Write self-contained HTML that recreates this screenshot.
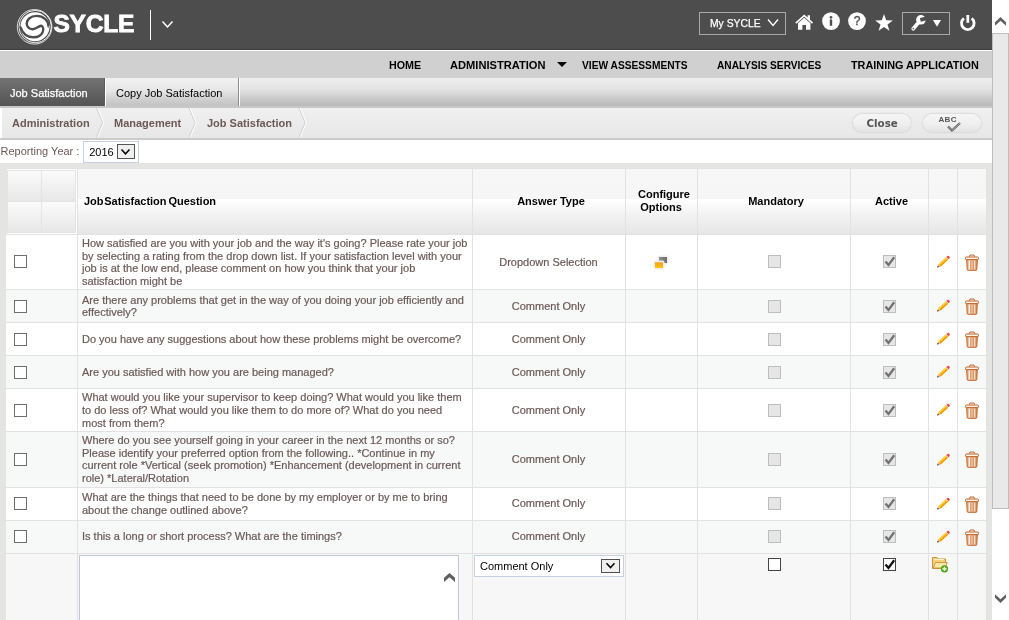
<!DOCTYPE html>
<html><head><meta charset="utf-8"><title>SYCLE - Job Satisfaction</title>
<style>
html,body{margin:0;padding:0;}
body{width:1009px;height:620px;overflow:hidden;position:relative;background:#e4e4e2;font-family:"Liberation Sans",Arial,sans-serif;font-size:11px;color:#6b5956;}
.abs,.abs *{position:absolute;}
.abs{will-change:transform;}
svg *{position:static;}
#top{left:0;top:0;width:992px;height:50px;background:#4d4d4d;box-shadow:inset 0 -1px 0 #3d3d3d;}
#logo{left:53.5px;top:8.5px;-webkit-text-stroke:0.8px #fff;font-size:24.6px;line-height:30px;font-weight:bold;color:#fff;letter-spacing:-0.3px;transform-origin:0 0;transform:scaleX(1.0);}
#mys{left:699px;top:12px;width:85px;height:21px;border:1px solid #a9a9a9;}
#mys span{left:10px;top:2.2px;-webkit-text-stroke:0.25px #fff;font-size:11.3px;line-height:16px;transform-origin:0 0;transform:scaleX(0.915);color:#fff;white-space:nowrap;}
#topline{left:0;top:50px;width:992px;height:1px;background:#fff;}
#nav{left:0;top:51px;width:992px;height:27px;background:#d0d0d0;}
#nav span{top:7px;transform-origin:0 0;font-weight:bold;font-size:11.5px;color:#000;white-space:nowrap;line-height:14px;}
#tabs{left:0;top:78px;width:992px;height:28px;background:linear-gradient(#eeeeee,#e3e3e3 40%,#c6c6c6 80%,#b9b9b9);}
#tab1{left:0;top:78px;width:104px;height:28px;border-right:1px solid #5e5e5e;background:linear-gradient(#737373,#545454);color:#fff;-webkit-text-stroke:0.25px #fff;font-size:11px;line-height:31px;text-indent:10px;white-space:nowrap;}
#tab2{left:105px;top:78px;width:134px;height:28px;border-left:1px solid #fff;border-right:1px solid #8c8c8c;box-shadow:1px 0 0 #fff;background:linear-gradient(#f2f2f2,#e6e6e6 45%,#cdcdcd 80%,#c2c2c2);color:#000;font-size:11px;line-height:31px;text-indent:10px;box-sizing:border-box;white-space:nowrap;}
#crumb{left:0;top:106px;width:992px;height:34px;background:linear-gradient(#f0f0f0,#e7e7e7);border-top:2px solid #c8c8c8;border-bottom:2px solid #cbcbcb;box-sizing:border-box;}
#crumb b{top:8px;font-size:11px;line-height:14px;color:#6b5956;white-space:nowrap;}
.pill{top:114px;height:18px;border-radius:9px;background:linear-gradient(#f5f5f5,#efefef 55%,#e3e3e3);box-shadow:0 0 1.5px 0.5px #cdcdcd;}
#ry{left:0;top:140px;width:992px;height:23px;background:#fff;}
#tbl{left:0;top:0;width:992px;height:620px;}
.hl{left:6px;width:981px;height:1px;background:#e2e2e2;}
.vl{top:169px;width:1px;height:451px;background:#e2e2e2;}
.row{left:6px;width:980px;}
.q{left:82px;-webkit-text-stroke:0.2px #6b5956;white-space:nowrap;font-size:11px;line-height:13px;height:13px;color:#6b5956;}
.at{left:472.5px;-webkit-text-stroke:0.2px #6b5956;width:152px;text-align:center;font-size:11px;line-height:13px;color:#6b5956;}
.cb{width:11px;height:11px;border:1px solid #6e6e6e;background:#fff;}
.cbd{width:11px;height:11px;border:1px solid #bdbdbd;background:#e6e6e6;}
.th{font-weight:bold;color:#000;font-size:11px;line-height:13px;text-align:center;white-space:nowrap;}
.hd{top:169px;height:65px;background:linear-gradient(#f7f7f7 0,#f6f6f6 29.5px,#fff 30.5px,#f3f3f3 45px,#e6e6e6 65px);}
.sub{background:linear-gradient(#fbfbfb,#e7e7e7);}
#sb{left:992px;top:0;width:17px;height:620px;background:#fff;}
</style></head><body>
<div id="top" class="abs">
<svg style="left:15px;top:7px" width="40" height="40" viewBox="15 7 40 40">
<circle cx="34.6" cy="26.8" r="17.3" fill="none" stroke="#fff" stroke-width="0.8"/>
<circle cx="35.2" cy="26.6" r="16.2" fill="none" stroke="#fff" stroke-width="0.9"/>
<circle cx="35" cy="26.7" r="14.5" fill="#fff"/>
<path d="M48.6 26.6 C48.8 20.8 43.6 15.9 36.6 15.9 C30.6 15.9 26.7 19.6 26.7 23.6 C26.7 27 29.4 29.3 32.7 29.2 C36.3 29 38.2 26.3 41.2 25.7 C43.4 26.6 43.7 29.5 42.6 32.2 C41.1 35.5 37.6 37.4 33.3 37.3 C27.6 37.1 22.8 33.8 20.6 27.6" fill="none" stroke="#4d4d4d" stroke-width="2.4" stroke-linecap="round"/>
<path d="M48.6 26.6 L50.2 27" fill="none" stroke="#bdbdbd" stroke-width="2"/>
</svg>
<div id="logo">SYCLE</div>
<div style="left:150px;top:10px;width:1px;height:30px;background:#fff"></div>
<svg style="left:160px;top:18px" width="16" height="12" viewBox="160 18 16 12"><path d="M162.5 21.5 L167.5 27 L172.5 21.5" fill="none" stroke="#fff" stroke-width="1.5"/></svg>
<div id="mys"><span>My SYCLE</span></div>
<svg style="left:764px;top:15px" width="18" height="14" viewBox="764 15 18 14"><path d="M768 19.5 L773 25.5 L778 19.5" fill="none" stroke="#fff" stroke-width="1.4"/></svg>
<svg style="left:792px;top:10px" width="190" height="26" viewBox="792 10 190 26">
<!-- home -->
<path d="M795.3 22.6 L804.2 14.4 L807.6 17.5 L807.6 15.2 L810 15.2 L810 19.7 L813.1 22.6 L812 23.8 L804.2 16.7 L796.4 23.8 Z" fill="#fff"/>
<path d="M798 23.3 L804.2 17.8 L810.4 23.3 L810.4 29.8 L806 29.8 L806 25 L802.4 25 L802.4 29.8 L798 29.8 Z" fill="#fff"/>
<!-- info -->
<circle cx="831" cy="21.1" r="8.9" fill="#fff"/>
<rect x="829.8" y="19.4" width="2.4" height="6.4" fill="#4d4d4d"/><circle cx="831" cy="17.3" r="1.35" fill="#4d4d4d"/>
<!-- help -->
<circle cx="857" cy="21.1" r="8.9" fill="#fff"/>
<text x="857.2" y="25.2" text-anchor="middle" font-family="Liberation Sans,Arial,sans-serif" font-size="12" stroke="#4d4d4d" stroke-width="0.35" fill="#4d4d4d">?</text>
<!-- star -->
<path d="M884 14 L886.2 20.3 L892.8 20.4 L887.5 24.4 L889.4 30.7 L884 26.9 L878.6 30.7 L880.5 24.4 L875.2 20.4 L881.8 20.3 Z" fill="#fff"/>
<!-- wrench box -->
<rect x="902.5" y="12.5" width="47" height="22" fill="none" stroke="#a9a9a9" stroke-width="1"/>
<path d="M920.8 19.9 L913.2 28.7" stroke="#fff" stroke-width="3.7" stroke-linecap="round" fill="none"/>
<circle cx="920.9" cy="19.8" r="4.8" fill="#fff"/>
<g transform="translate(920.9 19.8) rotate(-14)"><rect x="-0.6" y="-1.9" width="7" height="3.8" fill="#4d4d4d"/></g>
<circle cx="913.3" cy="28.6" r="0.8" fill="#4d4d4d"/>
<path d="M933 20 L941 20 L937 26.8 Z" fill="#fff"/>
<!-- power -->
<path d="M963.9 18.3 A6.3 6.3 0 1 0 971.7 18.3" fill="none" stroke="#fff" stroke-width="2.8" stroke-linecap="butt"/>
<rect x="966.4" y="15" width="2.8" height="7.8" fill="#fff"/>
</svg>
</div>
<div id="topline" class="abs"></div>
<div id="nav" class="abs">
<span style="left:388.5px;transform:scaleX(0.933)">HOME</span>
<span style="left:450.3px;transform:scaleX(0.967)">ADMINISTRATION</span>
<span style="left:582px;transform:scaleX(0.887)">VIEW ASSESSMENTS</span>
<span style="left:717.2px;transform:scaleX(0.881)">ANALYSIS SERVICES</span>
<span style="left:850.8px;transform:scaleX(0.943)">TRAINING APPLICATION</span>
<svg style="left:555px;top:9px" width="14" height="10" viewBox="0 0 14 10"><path d="M2 2 L12 2 L7 7 Z" fill="#000"/></svg>
</div>
<div id="tabs" class="abs"></div>
<div id="tab1" class="abs">Job Satisfaction</div>
<div id="tab2" class="abs">Copy Job Satisfaction</div>
<div id="crumb" class="abs">
<div style="left:0;top:0;width:2px;height:30px;background:#fff"></div>
<b style="left:12px">Administration</b>
<b style="left:114px">Management</b>
<b style="left:207px">Job Satisfaction</b>
<svg style="left:0;top:0" width="320" height="30" viewBox="0 108 320 30">
<g fill="none" stroke-width="1">
<path d="M96.5 108 L102.7 122.7 L96.5 137.5" stroke="#cdcdcd"/><path d="M97.6 108 L103.8 122.7 L97.6 137.5" stroke="#fff"/>
<path d="M189 108 L195.2 122.7 L189 137.5" stroke="#cdcdcd"/><path d="M190.1 108 L196.3 122.7 L190.1 137.5" stroke="#fff"/>
<path d="M299 108 L305.2 122.7 L299 137.5" stroke="#cdcdcd"/><path d="M300.1 108 L306.3 122.7 L300.1 137.5" stroke="#fff"/>
</g></svg>
</div>
<div class="abs pill" style="left:853px;width:58px"><b style="left:13.5px;top:3px;font-family:'DejaVu Sans',Verdana,sans-serif;font-size:10.3px;line-height:13px;color:#555;white-space:nowrap">Close</b></div>
<div class="abs pill" style="left:923px;width:58px"><b style="left:15.5px;top:0.5px;font-size:8px;line-height:9px;color:#555;letter-spacing:0.3px">ABC</b>
<svg style="left:21.5px;top:5.5px" width="18" height="14" viewBox="0 0 18 14"><path d="M3 6.5 L7 10.5 L15 3" fill="none" stroke="#555" stroke-width="2.2"/><path d="M3 6.5 L7 10.5 L15 3" fill="none" stroke="#d8d8d8" stroke-width="0.7"/></svg></div>
<div id="ry" class="abs"><span style="left:0.5px;top:4px;font-size:11px;line-height:14px;color:#6b5956;white-space:nowrap">Reporting Year :</span>
<div style="left:83px;top:1px;width:56px;height:22px;border:1px solid #c5d1e3;box-sizing:border-box;background:#fff"><span style="left:5.2px;top:3px;font-size:11px;line-height:14px;color:#000">2016</span>
<i style="left:32.5px;top:2px;width:16.5px;height:13px;border:1px solid #555;background:#efefef"></i>
<svg style="left:33px;top:2px" width="17" height="15" viewBox="0 0 17 15"><path d="M4.5 5.5 L8.5 9.8 L12.5 5.5" fill="none" stroke="#000" stroke-width="1.5"/></svg></div></div>

<div id="tbl" class="abs" style="will-change:transform">
<div class="hd" style="left:7px;width:70px"></div>
<div class="hd" style="left:78px;width:394px"></div>
<div class="hd" style="left:473px;width:152px"></div>
<div class="hd" style="left:626px;width:71px"></div>
<div class="hd" style="left:698px;width:152px"></div>
<div class="hd" style="left:851px;width:77px"></div>
<div class="hd" style="left:929px;width:28px"></div>
<div class="hd" style="left:958px;width:28px"></div>
<div style="left:7px;top:169px;width:70px;height:65px;background:#fff"></div>
<div class="sub" style="left:8px;top:171px;width:33px;height:30px;box-shadow:0 0 0 1px #e4e4e4"></div>
<div class="sub" style="left:42px;top:171px;width:33px;height:30px;box-shadow:0 0 0 1px #e4e4e4"></div>
<div class="sub" style="left:8px;top:202px;width:33px;height:30px;box-shadow:0 0 0 1px #e4e4e4"></div>
<div class="sub" style="left:42px;top:202px;width:33px;height:30px;box-shadow:0 0 0 1px #e4e4e4"></div>
<div class="th" style="left:84px;top:195px;text-align:left"><span style="position:static;word-spacing:-2.4px">Job Satisfaction</span><span style="position:static;word-spacing:-1.2px"> Question</span></div>
<div class="th" style="left:475px;width:152px;top:195px">Answer Type</div>
<div class="th" style="left:628.5px;width:71px;top:188px">Configure<br><span style="position:relative;left:-3px">Options</span></div>
<div class="th" style="left:700px;width:152px;top:195px">Mandatory</div>
<div class="th" style="left:853px;width:77px;top:195px">Active</div>
<div class="row" style="top:235px;height:54px;background:#fff"></div>
<div class="q" style="top:237px">How satisfied are you with your job and the way it's going? Please rate your job</div>
<div class="q" style="top:250px">by selecting a rating from the drop down list. If your satisfaction level with your</div>
<div class="q" style="top:262px">job is at the low end, please comment on how you think that your job</div>
<div class="q" style="top:275px">satisfaction might be</div>
<div class="at" style="top:256px">Dropdown Selection</div>
<div class="cb" style="left:14px;top:255px"></div>
<div class="cbd" style="left:768px;top:255px"></div>
<div class="cbd" style="left:883px;top:255px"></div>
<svg style="left:883px;top:255px" width="13" height="13" viewBox="0 0 13 13"><path d="M2.5 6.4 L5.5 9.9 L11.2 2.3" fill="none" stroke="#727272" stroke-width="2.3"/></svg>
<svg style="left:935px;top:254.0px" width="16" height="16" viewBox="0 0 16 16"><g transform="translate(2.1 13.6) rotate(-42.6)"><path d="M0 0 L3.2 -1.6 L3.2 1.6 Z" fill="#e3ae6e"/><path d="M0 0 L1.7 -0.85 L1.7 0.85 Z" fill="#2e2015"/><rect x="3.2" y="-1.6" width="10.4" height="3.2" fill="#ffb60a"/><rect x="3.2" y="-1.6" width="10.4" height="1" fill="#ffd650"/><rect x="3.2" y="0.7" width="10.4" height="0.9" fill="#e88a05"/><rect x="13.3" y="-1.6" width="0.9" height="3.2" fill="#d6d6d6"/><path d="M14.2 -1.6 L15.2 -1.6 A1.3 1.6 0 0 1 15.2 1.6 L14.2 1.6 Z" fill="#e8403a"/></g></svg>
<svg style="left:964px;top:253.5px" width="16" height="18" viewBox="0 0 16 18"><defs><linearGradient id="tg0" x1="0" x2="1" y1="0" y2="0"><stop offset="0" stop-color="#dc9a64"/><stop offset="0.25" stop-color="#f7dcc6"/><stop offset="0.5" stop-color="#e6b086"/><stop offset="0.75" stop-color="#ebbf9b"/><stop offset="1" stop-color="#cf7c42"/></linearGradient></defs><path d="M5.4 2.7 L6 1 L10 1 L10.6 2.7" fill="#fdf3ea" stroke="#c2652a" stroke-width="1"/><rect x="1.5" y="3" width="13" height="2.7" rx="0.9" fill="#fdf3ea" stroke="#c2652a" stroke-width="1"/><path d="M2.7 5.7 L3.2 15.4 Q3.2 16.3 4.1 16.3 L11.9 16.3 Q12.8 16.3 12.8 15.4 L13.3 5.7 Z" fill="url(#tg0)" stroke="#c2652a" stroke-width="1"/><path d="M5.6 7 L5.7 15 M8 7 L8 15 M10.4 7 L10.3 15" stroke="#fff" stroke-opacity="0.7" stroke-width="0.9" fill="none"/><path d="M6.8 7 L6.8 15 M9.2 7 L9.2 15" stroke="#c87238" stroke-opacity="0.8" stroke-width="0.9" fill="none"/></svg>
<svg style="left:652px;top:254.0px" width="18" height="16" viewBox="652 254 18 16"><defs><linearGradient id="og" x1="0" x2="0" y1="0" y2="1"><stop offset="0" stop-color="#f5c26a"/><stop offset="0.25" stop-color="#f9a515"/><stop offset="1" stop-color="#ffc800"/></linearGradient><linearGradient id="gg" x1="0" x2="1" y1="0" y2="0"><stop offset="0" stop-color="#939393"/><stop offset="1" stop-color="#6c6c6c"/></linearGradient></defs><rect x="657.5" y="255.5" width="11" height="9" rx="2" fill="#efeff2"/><rect x="659" y="257" width="8" height="6" fill="url(#gg)"/><rect x="653.5" y="260.5" width="11" height="9" rx="2" fill="#ebeef7"/><rect x="655" y="262" width="8" height="6" fill="url(#og)"/></svg>
<div class="row" style="top:290px;height:32px;background:#f7f9f9"></div>
<div class="q" style="top:294px">Are there any problems that get in the way of you doing your job efficiently and</div>
<div class="q" style="top:306px">effectively?</div>
<div class="at" style="top:300px">Comment Only</div>
<div class="cb" style="left:14px;top:300px"></div>
<div class="cbd" style="left:768px;top:300px"></div>
<div class="cbd" style="left:883px;top:300px"></div>
<svg style="left:883px;top:300px" width="13" height="13" viewBox="0 0 13 13"><path d="M2.5 6.4 L5.5 9.9 L11.2 2.3" fill="none" stroke="#727272" stroke-width="2.3"/></svg>
<svg style="left:935px;top:298.0px" width="16" height="16" viewBox="0 0 16 16"><g transform="translate(2.1 13.6) rotate(-42.6)"><path d="M0 0 L3.2 -1.6 L3.2 1.6 Z" fill="#e3ae6e"/><path d="M0 0 L1.7 -0.85 L1.7 0.85 Z" fill="#2e2015"/><rect x="3.2" y="-1.6" width="10.4" height="3.2" fill="#ffb60a"/><rect x="3.2" y="-1.6" width="10.4" height="1" fill="#ffd650"/><rect x="3.2" y="0.7" width="10.4" height="0.9" fill="#e88a05"/><rect x="13.3" y="-1.6" width="0.9" height="3.2" fill="#d6d6d6"/><path d="M14.2 -1.6 L15.2 -1.6 A1.3 1.6 0 0 1 15.2 1.6 L14.2 1.6 Z" fill="#e8403a"/></g></svg>
<svg style="left:964px;top:297.5px" width="16" height="18" viewBox="0 0 16 18"><defs><linearGradient id="tg1" x1="0" x2="1" y1="0" y2="0"><stop offset="0" stop-color="#dc9a64"/><stop offset="0.25" stop-color="#f7dcc6"/><stop offset="0.5" stop-color="#e6b086"/><stop offset="0.75" stop-color="#ebbf9b"/><stop offset="1" stop-color="#cf7c42"/></linearGradient></defs><path d="M5.4 2.7 L6 1 L10 1 L10.6 2.7" fill="#fdf3ea" stroke="#c2652a" stroke-width="1"/><rect x="1.5" y="3" width="13" height="2.7" rx="0.9" fill="#fdf3ea" stroke="#c2652a" stroke-width="1"/><path d="M2.7 5.7 L3.2 15.4 Q3.2 16.3 4.1 16.3 L11.9 16.3 Q12.8 16.3 12.8 15.4 L13.3 5.7 Z" fill="url(#tg1)" stroke="#c2652a" stroke-width="1"/><path d="M5.6 7 L5.7 15 M8 7 L8 15 M10.4 7 L10.3 15" stroke="#fff" stroke-opacity="0.7" stroke-width="0.9" fill="none"/><path d="M6.8 7 L6.8 15 M9.2 7 L9.2 15" stroke="#c87238" stroke-opacity="0.8" stroke-width="0.9" fill="none"/></svg>
<div class="row" style="top:323px;height:32px;background:#fff"></div>
<div class="q" style="top:333px">Do you have any suggestions about how these problems might be overcome?</div>
<div class="at" style="top:333px">Comment Only</div>
<div class="cb" style="left:14px;top:333px"></div>
<div class="cbd" style="left:768px;top:333px"></div>
<div class="cbd" style="left:883px;top:333px"></div>
<svg style="left:883px;top:333px" width="13" height="13" viewBox="0 0 13 13"><path d="M2.5 6.4 L5.5 9.9 L11.2 2.3" fill="none" stroke="#727272" stroke-width="2.3"/></svg>
<svg style="left:935px;top:331.0px" width="16" height="16" viewBox="0 0 16 16"><g transform="translate(2.1 13.6) rotate(-42.6)"><path d="M0 0 L3.2 -1.6 L3.2 1.6 Z" fill="#e3ae6e"/><path d="M0 0 L1.7 -0.85 L1.7 0.85 Z" fill="#2e2015"/><rect x="3.2" y="-1.6" width="10.4" height="3.2" fill="#ffb60a"/><rect x="3.2" y="-1.6" width="10.4" height="1" fill="#ffd650"/><rect x="3.2" y="0.7" width="10.4" height="0.9" fill="#e88a05"/><rect x="13.3" y="-1.6" width="0.9" height="3.2" fill="#d6d6d6"/><path d="M14.2 -1.6 L15.2 -1.6 A1.3 1.6 0 0 1 15.2 1.6 L14.2 1.6 Z" fill="#e8403a"/></g></svg>
<svg style="left:964px;top:330.5px" width="16" height="18" viewBox="0 0 16 18"><defs><linearGradient id="tg2" x1="0" x2="1" y1="0" y2="0"><stop offset="0" stop-color="#dc9a64"/><stop offset="0.25" stop-color="#f7dcc6"/><stop offset="0.5" stop-color="#e6b086"/><stop offset="0.75" stop-color="#ebbf9b"/><stop offset="1" stop-color="#cf7c42"/></linearGradient></defs><path d="M5.4 2.7 L6 1 L10 1 L10.6 2.7" fill="#fdf3ea" stroke="#c2652a" stroke-width="1"/><rect x="1.5" y="3" width="13" height="2.7" rx="0.9" fill="#fdf3ea" stroke="#c2652a" stroke-width="1"/><path d="M2.7 5.7 L3.2 15.4 Q3.2 16.3 4.1 16.3 L11.9 16.3 Q12.8 16.3 12.8 15.4 L13.3 5.7 Z" fill="url(#tg2)" stroke="#c2652a" stroke-width="1"/><path d="M5.6 7 L5.7 15 M8 7 L8 15 M10.4 7 L10.3 15" stroke="#fff" stroke-opacity="0.7" stroke-width="0.9" fill="none"/><path d="M6.8 7 L6.8 15 M9.2 7 L9.2 15" stroke="#c87238" stroke-opacity="0.8" stroke-width="0.9" fill="none"/></svg>
<div class="row" style="top:356px;height:32px;background:#f7f9f9"></div>
<div class="q" style="top:366px">Are you satisfied with how you are being managed?</div>
<div class="at" style="top:366px">Comment Only</div>
<div class="cb" style="left:14px;top:366px"></div>
<div class="cbd" style="left:768px;top:366px"></div>
<div class="cbd" style="left:883px;top:366px"></div>
<svg style="left:883px;top:366px" width="13" height="13" viewBox="0 0 13 13"><path d="M2.5 6.4 L5.5 9.9 L11.2 2.3" fill="none" stroke="#727272" stroke-width="2.3"/></svg>
<svg style="left:935px;top:364.0px" width="16" height="16" viewBox="0 0 16 16"><g transform="translate(2.1 13.6) rotate(-42.6)"><path d="M0 0 L3.2 -1.6 L3.2 1.6 Z" fill="#e3ae6e"/><path d="M0 0 L1.7 -0.85 L1.7 0.85 Z" fill="#2e2015"/><rect x="3.2" y="-1.6" width="10.4" height="3.2" fill="#ffb60a"/><rect x="3.2" y="-1.6" width="10.4" height="1" fill="#ffd650"/><rect x="3.2" y="0.7" width="10.4" height="0.9" fill="#e88a05"/><rect x="13.3" y="-1.6" width="0.9" height="3.2" fill="#d6d6d6"/><path d="M14.2 -1.6 L15.2 -1.6 A1.3 1.6 0 0 1 15.2 1.6 L14.2 1.6 Z" fill="#e8403a"/></g></svg>
<svg style="left:964px;top:363.5px" width="16" height="18" viewBox="0 0 16 18"><defs><linearGradient id="tg3" x1="0" x2="1" y1="0" y2="0"><stop offset="0" stop-color="#dc9a64"/><stop offset="0.25" stop-color="#f7dcc6"/><stop offset="0.5" stop-color="#e6b086"/><stop offset="0.75" stop-color="#ebbf9b"/><stop offset="1" stop-color="#cf7c42"/></linearGradient></defs><path d="M5.4 2.7 L6 1 L10 1 L10.6 2.7" fill="#fdf3ea" stroke="#c2652a" stroke-width="1"/><rect x="1.5" y="3" width="13" height="2.7" rx="0.9" fill="#fdf3ea" stroke="#c2652a" stroke-width="1"/><path d="M2.7 5.7 L3.2 15.4 Q3.2 16.3 4.1 16.3 L11.9 16.3 Q12.8 16.3 12.8 15.4 L13.3 5.7 Z" fill="url(#tg3)" stroke="#c2652a" stroke-width="1"/><path d="M5.6 7 L5.7 15 M8 7 L8 15 M10.4 7 L10.3 15" stroke="#fff" stroke-opacity="0.7" stroke-width="0.9" fill="none"/><path d="M6.8 7 L6.8 15 M9.2 7 L9.2 15" stroke="#c87238" stroke-opacity="0.8" stroke-width="0.9" fill="none"/></svg>
<div class="row" style="top:389px;height:42px;background:#fff"></div>
<div class="q" style="top:391px">What would you like your supervisor to keep doing? What would you like them</div>
<div class="q" style="top:404px">to do less of? What would you like them to do more of? What do you need</div>
<div class="q" style="top:417px">most from them?</div>
<div class="at" style="top:404px">Comment Only</div>
<div class="cb" style="left:14px;top:404px"></div>
<div class="cbd" style="left:768px;top:404px"></div>
<div class="cbd" style="left:883px;top:404px"></div>
<svg style="left:883px;top:404px" width="13" height="13" viewBox="0 0 13 13"><path d="M2.5 6.4 L5.5 9.9 L11.2 2.3" fill="none" stroke="#727272" stroke-width="2.3"/></svg>
<svg style="left:935px;top:402.0px" width="16" height="16" viewBox="0 0 16 16"><g transform="translate(2.1 13.6) rotate(-42.6)"><path d="M0 0 L3.2 -1.6 L3.2 1.6 Z" fill="#e3ae6e"/><path d="M0 0 L1.7 -0.85 L1.7 0.85 Z" fill="#2e2015"/><rect x="3.2" y="-1.6" width="10.4" height="3.2" fill="#ffb60a"/><rect x="3.2" y="-1.6" width="10.4" height="1" fill="#ffd650"/><rect x="3.2" y="0.7" width="10.4" height="0.9" fill="#e88a05"/><rect x="13.3" y="-1.6" width="0.9" height="3.2" fill="#d6d6d6"/><path d="M14.2 -1.6 L15.2 -1.6 A1.3 1.6 0 0 1 15.2 1.6 L14.2 1.6 Z" fill="#e8403a"/></g></svg>
<svg style="left:964px;top:401.5px" width="16" height="18" viewBox="0 0 16 18"><defs><linearGradient id="tg4" x1="0" x2="1" y1="0" y2="0"><stop offset="0" stop-color="#dc9a64"/><stop offset="0.25" stop-color="#f7dcc6"/><stop offset="0.5" stop-color="#e6b086"/><stop offset="0.75" stop-color="#ebbf9b"/><stop offset="1" stop-color="#cf7c42"/></linearGradient></defs><path d="M5.4 2.7 L6 1 L10 1 L10.6 2.7" fill="#fdf3ea" stroke="#c2652a" stroke-width="1"/><rect x="1.5" y="3" width="13" height="2.7" rx="0.9" fill="#fdf3ea" stroke="#c2652a" stroke-width="1"/><path d="M2.7 5.7 L3.2 15.4 Q3.2 16.3 4.1 16.3 L11.9 16.3 Q12.8 16.3 12.8 15.4 L13.3 5.7 Z" fill="url(#tg4)" stroke="#c2652a" stroke-width="1"/><path d="M5.6 7 L5.7 15 M8 7 L8 15 M10.4 7 L10.3 15" stroke="#fff" stroke-opacity="0.7" stroke-width="0.9" fill="none"/><path d="M6.8 7 L6.8 15 M9.2 7 L9.2 15" stroke="#c87238" stroke-opacity="0.8" stroke-width="0.9" fill="none"/></svg>
<div class="row" style="top:432px;height:55px;background:#f7f9f9"></div>
<div class="q" style="top:434px">Where do you see yourself going in your career in the next 12 months or so?</div>
<div class="q" style="top:447px">Please identify your preferred option from the following.. *Continue in my</div>
<div class="q" style="top:459px">current role *Vertical (seek promotion) *Enhancement (development in current</div>
<div class="q" style="top:472px">role) *Lateral/Rotation</div>
<div class="at" style="top:453px">Comment Only</div>
<div class="cb" style="left:14px;top:453px"></div>
<div class="cbd" style="left:768px;top:453px"></div>
<div class="cbd" style="left:883px;top:453px"></div>
<svg style="left:883px;top:453px" width="13" height="13" viewBox="0 0 13 13"><path d="M2.5 6.4 L5.5 9.9 L11.2 2.3" fill="none" stroke="#727272" stroke-width="2.3"/></svg>
<svg style="left:935px;top:451.5px" width="16" height="16" viewBox="0 0 16 16"><g transform="translate(2.1 13.6) rotate(-42.6)"><path d="M0 0 L3.2 -1.6 L3.2 1.6 Z" fill="#e3ae6e"/><path d="M0 0 L1.7 -0.85 L1.7 0.85 Z" fill="#2e2015"/><rect x="3.2" y="-1.6" width="10.4" height="3.2" fill="#ffb60a"/><rect x="3.2" y="-1.6" width="10.4" height="1" fill="#ffd650"/><rect x="3.2" y="0.7" width="10.4" height="0.9" fill="#e88a05"/><rect x="13.3" y="-1.6" width="0.9" height="3.2" fill="#d6d6d6"/><path d="M14.2 -1.6 L15.2 -1.6 A1.3 1.6 0 0 1 15.2 1.6 L14.2 1.6 Z" fill="#e8403a"/></g></svg>
<svg style="left:964px;top:451.0px" width="16" height="18" viewBox="0 0 16 18"><defs><linearGradient id="tg5" x1="0" x2="1" y1="0" y2="0"><stop offset="0" stop-color="#dc9a64"/><stop offset="0.25" stop-color="#f7dcc6"/><stop offset="0.5" stop-color="#e6b086"/><stop offset="0.75" stop-color="#ebbf9b"/><stop offset="1" stop-color="#cf7c42"/></linearGradient></defs><path d="M5.4 2.7 L6 1 L10 1 L10.6 2.7" fill="#fdf3ea" stroke="#c2652a" stroke-width="1"/><rect x="1.5" y="3" width="13" height="2.7" rx="0.9" fill="#fdf3ea" stroke="#c2652a" stroke-width="1"/><path d="M2.7 5.7 L3.2 15.4 Q3.2 16.3 4.1 16.3 L11.9 16.3 Q12.8 16.3 12.8 15.4 L13.3 5.7 Z" fill="url(#tg5)" stroke="#c2652a" stroke-width="1"/><path d="M5.6 7 L5.7 15 M8 7 L8 15 M10.4 7 L10.3 15" stroke="#fff" stroke-opacity="0.7" stroke-width="0.9" fill="none"/><path d="M6.8 7 L6.8 15 M9.2 7 L9.2 15" stroke="#c87238" stroke-opacity="0.8" stroke-width="0.9" fill="none"/></svg>
<div class="row" style="top:488px;height:32px;background:#fff"></div>
<div class="q" style="top:491px">What are the things that need to be done by my employer or by me to bring</div>
<div class="q" style="top:504px">about the change outlined above?</div>
<div class="at" style="top:497px">Comment Only</div>
<div class="cb" style="left:14px;top:497px"></div>
<div class="cbd" style="left:768px;top:497px"></div>
<div class="cbd" style="left:883px;top:497px"></div>
<svg style="left:883px;top:497px" width="13" height="13" viewBox="0 0 13 13"><path d="M2.5 6.4 L5.5 9.9 L11.2 2.3" fill="none" stroke="#727272" stroke-width="2.3"/></svg>
<svg style="left:935px;top:496.0px" width="16" height="16" viewBox="0 0 16 16"><g transform="translate(2.1 13.6) rotate(-42.6)"><path d="M0 0 L3.2 -1.6 L3.2 1.6 Z" fill="#e3ae6e"/><path d="M0 0 L1.7 -0.85 L1.7 0.85 Z" fill="#2e2015"/><rect x="3.2" y="-1.6" width="10.4" height="3.2" fill="#ffb60a"/><rect x="3.2" y="-1.6" width="10.4" height="1" fill="#ffd650"/><rect x="3.2" y="0.7" width="10.4" height="0.9" fill="#e88a05"/><rect x="13.3" y="-1.6" width="0.9" height="3.2" fill="#d6d6d6"/><path d="M14.2 -1.6 L15.2 -1.6 A1.3 1.6 0 0 1 15.2 1.6 L14.2 1.6 Z" fill="#e8403a"/></g></svg>
<svg style="left:964px;top:495.5px" width="16" height="18" viewBox="0 0 16 18"><defs><linearGradient id="tg6" x1="0" x2="1" y1="0" y2="0"><stop offset="0" stop-color="#dc9a64"/><stop offset="0.25" stop-color="#f7dcc6"/><stop offset="0.5" stop-color="#e6b086"/><stop offset="0.75" stop-color="#ebbf9b"/><stop offset="1" stop-color="#cf7c42"/></linearGradient></defs><path d="M5.4 2.7 L6 1 L10 1 L10.6 2.7" fill="#fdf3ea" stroke="#c2652a" stroke-width="1"/><rect x="1.5" y="3" width="13" height="2.7" rx="0.9" fill="#fdf3ea" stroke="#c2652a" stroke-width="1"/><path d="M2.7 5.7 L3.2 15.4 Q3.2 16.3 4.1 16.3 L11.9 16.3 Q12.8 16.3 12.8 15.4 L13.3 5.7 Z" fill="url(#tg6)" stroke="#c2652a" stroke-width="1"/><path d="M5.6 7 L5.7 15 M8 7 L8 15 M10.4 7 L10.3 15" stroke="#fff" stroke-opacity="0.7" stroke-width="0.9" fill="none"/><path d="M6.8 7 L6.8 15 M9.2 7 L9.2 15" stroke="#c87238" stroke-opacity="0.8" stroke-width="0.9" fill="none"/></svg>
<div class="row" style="top:521px;height:32px;background:#f7f9f9"></div>
<div class="q" style="top:530px">Is this a long or short process? What are the timings?</div>
<div class="at" style="top:530px">Comment Only</div>
<div class="cb" style="left:14px;top:530px"></div>
<div class="cbd" style="left:768px;top:530px"></div>
<div class="cbd" style="left:883px;top:530px"></div>
<svg style="left:883px;top:530px" width="13" height="13" viewBox="0 0 13 13"><path d="M2.5 6.4 L5.5 9.9 L11.2 2.3" fill="none" stroke="#727272" stroke-width="2.3"/></svg>
<svg style="left:935px;top:529.0px" width="16" height="16" viewBox="0 0 16 16"><g transform="translate(2.1 13.6) rotate(-42.6)"><path d="M0 0 L3.2 -1.6 L3.2 1.6 Z" fill="#e3ae6e"/><path d="M0 0 L1.7 -0.85 L1.7 0.85 Z" fill="#2e2015"/><rect x="3.2" y="-1.6" width="10.4" height="3.2" fill="#ffb60a"/><rect x="3.2" y="-1.6" width="10.4" height="1" fill="#ffd650"/><rect x="3.2" y="0.7" width="10.4" height="0.9" fill="#e88a05"/><rect x="13.3" y="-1.6" width="0.9" height="3.2" fill="#d6d6d6"/><path d="M14.2 -1.6 L15.2 -1.6 A1.3 1.6 0 0 1 15.2 1.6 L14.2 1.6 Z" fill="#e8403a"/></g></svg>
<svg style="left:964px;top:528.5px" width="16" height="18" viewBox="0 0 16 18"><defs><linearGradient id="tg7" x1="0" x2="1" y1="0" y2="0"><stop offset="0" stop-color="#dc9a64"/><stop offset="0.25" stop-color="#f7dcc6"/><stop offset="0.5" stop-color="#e6b086"/><stop offset="0.75" stop-color="#ebbf9b"/><stop offset="1" stop-color="#cf7c42"/></linearGradient></defs><path d="M5.4 2.7 L6 1 L10 1 L10.6 2.7" fill="#fdf3ea" stroke="#c2652a" stroke-width="1"/><rect x="1.5" y="3" width="13" height="2.7" rx="0.9" fill="#fdf3ea" stroke="#c2652a" stroke-width="1"/><path d="M2.7 5.7 L3.2 15.4 Q3.2 16.3 4.1 16.3 L11.9 16.3 Q12.8 16.3 12.8 15.4 L13.3 5.7 Z" fill="url(#tg7)" stroke="#c2652a" stroke-width="1"/><path d="M5.6 7 L5.7 15 M8 7 L8 15 M10.4 7 L10.3 15" stroke="#fff" stroke-opacity="0.7" stroke-width="0.9" fill="none"/><path d="M6.8 7 L6.8 15 M9.2 7 L9.2 15" stroke="#c87238" stroke-opacity="0.8" stroke-width="0.9" fill="none"/></svg>
<div class="row" style="top:554px;height:66px;background:#f7f7f7"></div>
<div style="left:79px;top:555px;width:380px;height:70px;background:#fff;border:1px solid #bcc8da;box-sizing:border-box"></div>
<div style="left:474px;top:555px;width:150px;height:22px;background:#fff;border:1px solid #c5d1e3;box-sizing:border-box"><span style="left:5px;top:4px;font-size:11px;line-height:13px;color:#000;white-space:nowrap">Comment Only</span><i style="left:126px;top:3px;width:17px;height:12px;border:1px solid #505050;background:#f0f0f0;box-sizing:content-box"></i></div>
<div class="cb" style="left:768px;top:558px;border-color:#444"></div>
<div class="cb" style="left:883px;top:558px;border-color:#444"></div>
<svg style="left:883px;top:558px" width="13" height="13" viewBox="0 0 13 13"><path d="M2.5 6.4 L5.5 9.9 L11.2 2.3" fill="none" stroke="#111" stroke-width="2.3"/></svg>
<svg style="left:931px;top:556px" width="18" height="18" viewBox="931 556 18 18"><path d="M932.5 557.5 L937 557.5 L938 559 L945.5 559 L945.5 568.5 L932.5 568.5 Z" fill="#f5d27a" stroke="#c8913a" stroke-width="1"/><path d="M933.2 568 L935.5 562.5 L947.3 562.5 L945 568 Z" fill="#fbe9a6" stroke="#c8913a" stroke-width="0.9"/><path d="M934 559.5 L944 559.5" stroke="#fdf0c0" stroke-width="1"/><circle cx="944.5" cy="568.8" r="3.6" fill="#3f9b12"/><circle cx="944.5" cy="568.8" r="2.8" fill="#5cb81e"/><path d="M944.5 566.7 L944.5 570.9 M942.4 568.8 L946.6 568.8" stroke="#fff" stroke-width="1.3"/></svg>
<svg style="left:442px;top:570px" width="16" height="14" viewBox="442 570 16 14"><path d="M444 577.8 L449.5 573 L455 577.8 L455 582 L449.5 577.2 L444 582 Z" fill="#606060"/></svg>
<svg style="left:600px;top:558px" width="22" height="16" viewBox="600 558 22 16"><path d="M606.5 563.3 L610.5 567.6 L614.5 563.3" fill="none" stroke="#000" stroke-width="1.5"/></svg>
<div class="hl" style="top:168px"></div>
<div class="hl" style="top:234px"></div>
<div class="hl" style="top:289px"></div>
<div class="hl" style="top:322px"></div>
<div class="hl" style="top:355px"></div>
<div class="hl" style="top:388px"></div>
<div class="hl" style="top:431px"></div>
<div class="hl" style="top:487px"></div>
<div class="hl" style="top:520px"></div>
<div class="hl" style="top:553px"></div>
<div class="vl" style="left:77px"></div>
<div class="vl" style="left:472px"></div>
<div class="vl" style="left:625px"></div>
<div class="vl" style="left:697px"></div>
<div class="vl" style="left:850px"></div>
<div class="vl" style="left:928px"></div>
<div class="vl" style="left:957px"></div>
<div class="vl" style="left:986px"></div>
</div>
<div id="sb" class="abs"><svg style="left:0;top:10px" width="17" height="20" viewBox="992 10 17 20"><path d="M995 22.2 L1000.5 17 L1006 22.2 L1006 25.8 L1000.5 20.8 L995 25.8 Z" fill="#606060"/></svg><svg style="left:0;top:588px" width="17" height="20" viewBox="992 588 17 20"><path d="M995 594.2 L1000.5 599.3 L1006 594.2 L1006 597.8 L1000.5 603 L995 597.8 Z" fill="#606060"/></svg><div style="left:0;top:33px;width:17px;height:476px;background:#e9e9e9;border:1px solid #bdbdbd;box-sizing:border-box"></div></div>
</body></html>
